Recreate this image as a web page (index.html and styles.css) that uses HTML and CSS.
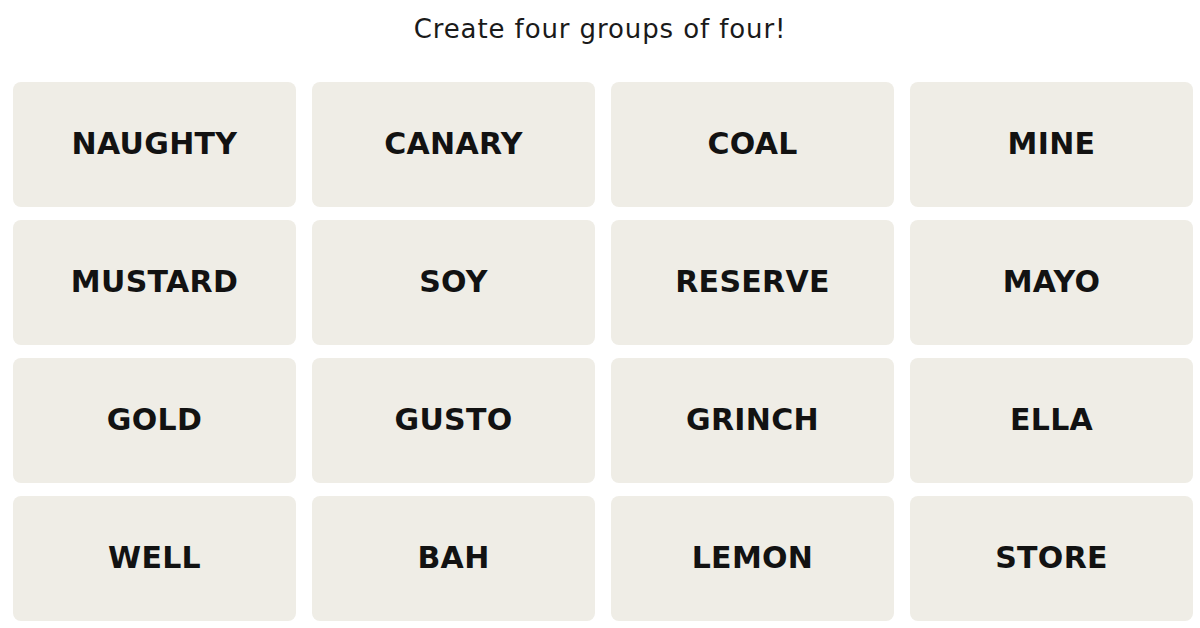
FILE: index.html
```html
<!DOCTYPE html>
<html lang="en">
  <head>
    <meta charset="UTF-8" />
    <meta name="viewport" content="width=device-width, initial-scale=1.0" />
    <title>Connections</title>
    <link rel="stylesheet" href="styles.css">
  </head>
  <body>
    <div class="game">
      <p class="prompt">Create four groups of four!</p>
      <div class="board">
        <button class="tile">NAUGHTY</button>
        <button class="tile">CANARY</button>
        <button class="tile">COAL</button>
        <button class="tile">MINE</button>
        <button class="tile">MUSTARD</button>
        <button class="tile">SOY</button>
        <button class="tile">RESERVE</button>
        <button class="tile">MAYO</button>
        <button class="tile">GOLD</button>
        <button class="tile">GUSTO</button>
        <button class="tile">GRINCH</button>
        <button class="tile">ELLA</button>
        <button class="tile">WELL</button>
        <button class="tile">BAH</button>
        <button class="tile">LEMON</button>
        <button class="tile">STORE</button>
      </div>
    </div>
  </body>
</html>
```
FILE: styles.css
```css
body {
  font-family: "DejaVu Sans", sans-serif;
  background-color: #ffffff;
  margin: 0;
}
.game {
  width: 1200px;
  height: 628px;
}
.prompt {
  margin: 0;
  height: 82px;
  padding-top: 14px;
  box-sizing: border-box;
  text-align: center;
  font-size: 26px;
  letter-spacing: 0.9px;
  color: #1a1a1a;
}
.board {
  display: grid;
  grid-template-columns: repeat(4, 283px);
  grid-auto-rows: 125px;
  column-gap: 16px;
  row-gap: 13px;
  padding-left: 13px;
}
.tile {
  background-color: #efede6;
  border: none;
  border-radius: 8px;
  font-family: "DejaVu Sans", sans-serif;
  font-weight: bold;
  font-size: 30px;
  letter-spacing: 0.3px;
  color: #121212;
  padding: 0 0 3px;
  cursor: pointer;
}
```
